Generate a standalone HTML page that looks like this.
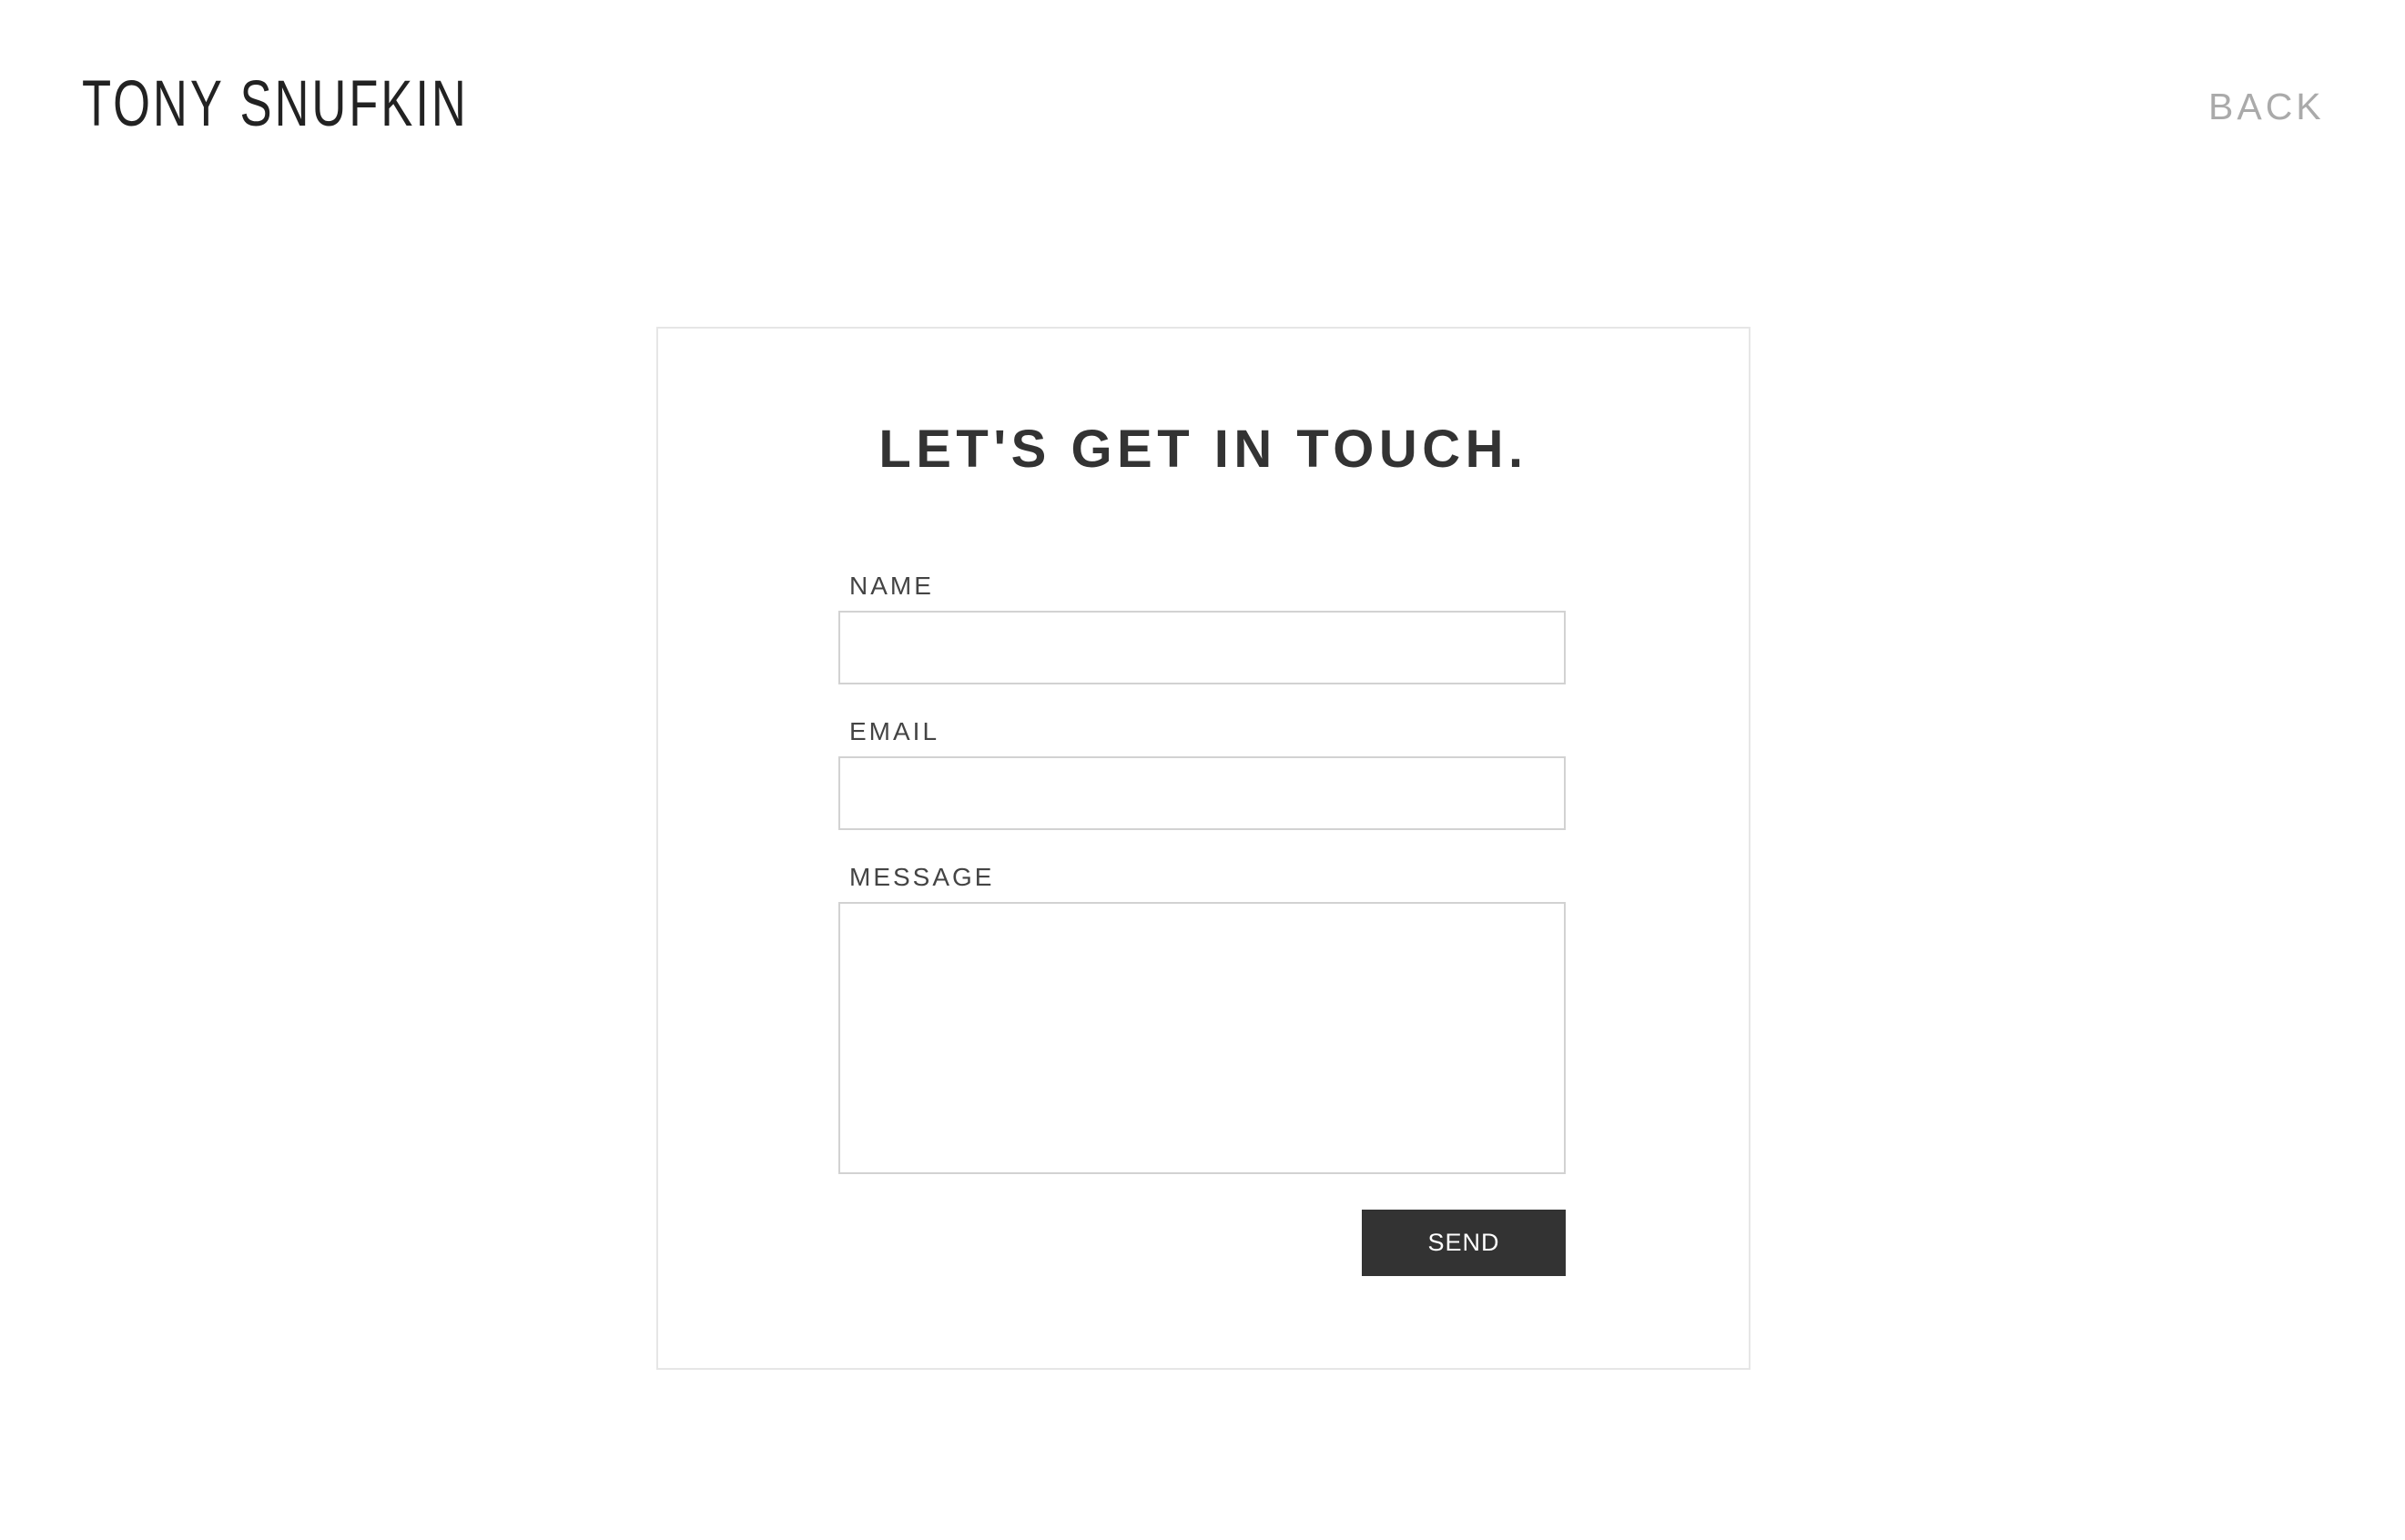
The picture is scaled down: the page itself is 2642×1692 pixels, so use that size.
<!DOCTYPE html>
<html><head><meta charset="utf-8"><style>
html,body{margin:0;padding:0;background:#fff;}
body{width:2642px;height:1692px;position:relative;overflow:hidden;font-family:"Liberation Sans",sans-serif;}
.logo{position:absolute;left:90px;top:79px;font-size:71px;line-height:71px;color:#222;font-weight:normal;transform:scaleX(0.74);transform-origin:left top;letter-spacing:4px;white-space:nowrap;}
.back{position:absolute;left:2426px;top:97px;font-size:41px;line-height:41px;color:#aaa;letter-spacing:4px;}
.card{position:absolute;left:721px;top:359px;width:1198px;height:1142px;border:2px solid #e6e6e6;}
.title{position:absolute;left:721px;width:1202px;top:465px;text-align:center;font-size:58px;line-height:58px;font-weight:bold;color:#333;letter-spacing:5.5px;}
.lbl{position:absolute;left:933px;font-size:28px;line-height:28px;color:#444;letter-spacing:3px;}
.in{position:absolute;left:921px;width:795px;border:2px solid #d2d2d2;background:#fff;}
.btn{position:absolute;left:1496px;top:1329px;width:224px;height:73px;background:#333;color:#fff;font-size:27px;line-height:73px;text-align:center;letter-spacing:1px;}
</style></head><body>
<div class="logo">TONY SNUFKIN</div>
<div class="back">BACK</div>
<div class="card"></div>
<div class="title">LET'S GET IN TOUCH.</div>
<div class="lbl" style="top:630px">NAME</div>
<div class="in" style="top:671px;height:77px"></div>
<div class="lbl" style="top:790px">EMAIL</div>
<div class="in" style="top:831px;height:77px"></div>
<div class="lbl" style="top:950px">MESSAGE</div>
<div class="in" style="top:991px;height:295px"></div>
<div class="btn">SEND</div>
</body></html>
